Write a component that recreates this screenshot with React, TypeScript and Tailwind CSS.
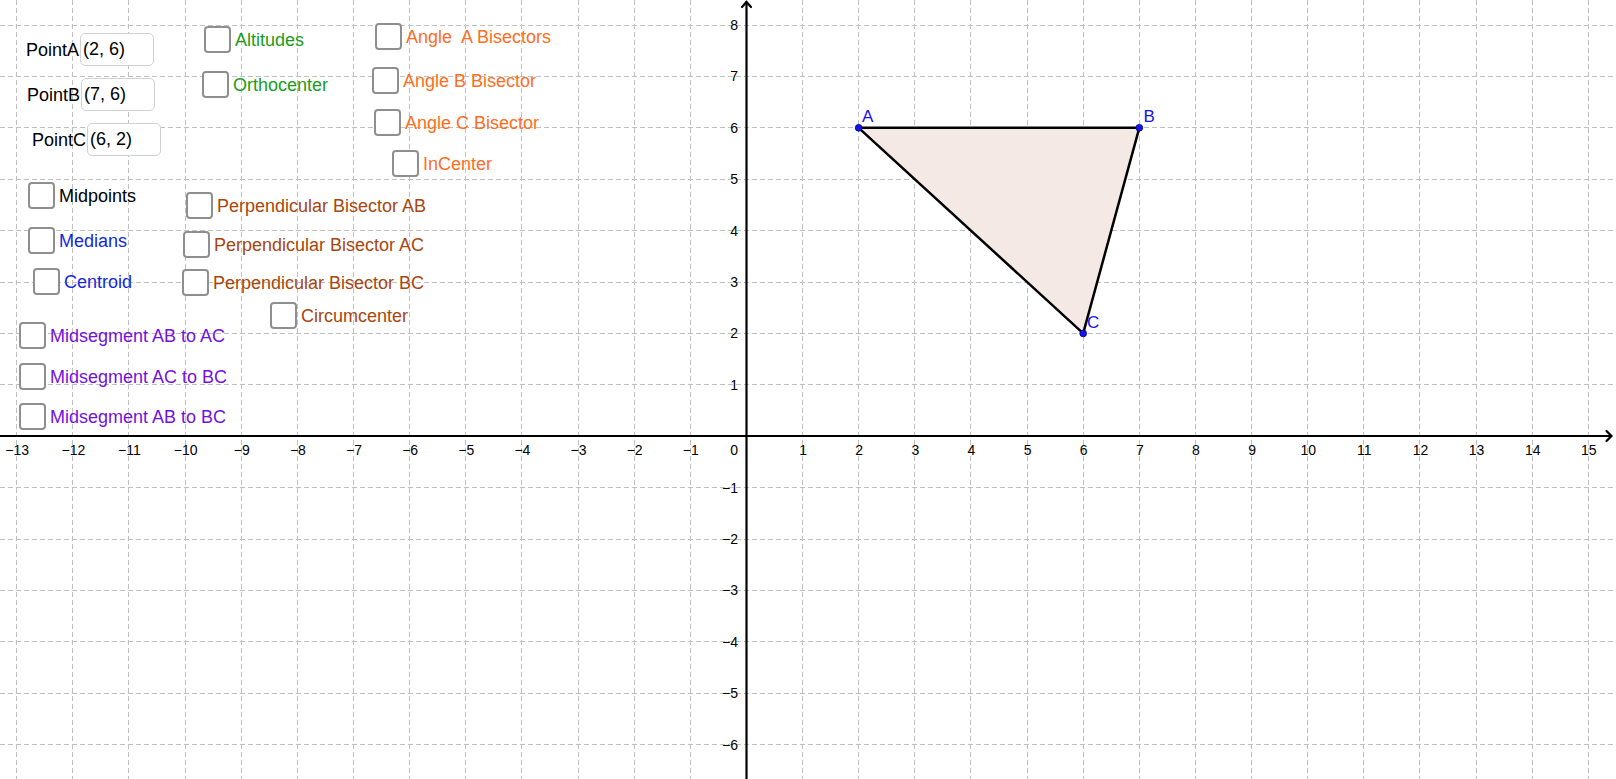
import React from 'react';

const UX = 56.13;
const UY = 51.4;
const OX = 746.4;
const OY = 436.2;

const px = (x: number) => OX + UX * x;
const py = (y: number) => OY - UY * y;
const crisp = (v: number) => Math.round(v - 0.5) + 0.5;

const MINUS = '\u2212';
const fmt = (n: number) => (n < 0 ? MINUS + Math.abs(n) : String(n));

interface Toggle {
  x: number;
  y: number;
  label: string;
  color: string;
}

const GREEN = 'text-[#1a9c1a]';
const ORANGE = 'text-[#ff6d1e]';
const BROWN = 'text-[#a8460d]';
const BLUE = 'text-[#1428e0]';
const PURPLE = 'text-[#7311dd]';
const BLACK = 'text-black';

const toggles: Toggle[] = [
  { x: 204, y: 26, label: 'Altitudes', color: GREEN },
  { x: 202, y: 71, label: 'Orthocenter', color: GREEN },
  { x: 375, y: 23, label: 'Angle\u00a0 A Bisectors', color: ORANGE },
  { x: 372, y: 67, label: 'Angle B Bisector', color: ORANGE },
  { x: 374, y: 109, label: 'Angle C Bisector', color: ORANGE },
  { x: 392, y: 150, label: 'InCenter', color: ORANGE },
  { x: 28, y: 182, label: 'Midpoints', color: BLACK },
  { x: 28, y: 227, label: 'Medians', color: BLUE },
  { x: 33, y: 268, label: 'Centroid', color: BLUE },
  { x: 186, y: 192, label: 'Perpendicular Bisector AB', color: BROWN },
  { x: 183, y: 231, label: 'Perpendicular Bisector AC', color: BROWN },
  { x: 182, y: 269, label: 'Perpendicular Bisector BC', color: BROWN },
  { x: 270, y: 302, label: 'Circumcenter', color: BROWN },
  { x: 19, y: 322, label: 'Midsegment AB to AC', color: PURPLE },
  { x: 19, y: 363, label: 'Midsegment AC to BC', color: PURPLE },
  { x: 19, y: 403, label: 'Midsegment AB to BC', color: PURPLE },
];

const inputs = [
  { x: 26, y: 33, label: 'PointA', value: '(2, 6)' },
  { x: 27, y: 78, label: 'PointB', value: '(7, 6)' },
  { x: 32, y: 123, label: 'PointC', value: '(6, 2)' },
];

const xs = Array.from({ length: 29 }, (_, i) => i - 13);
const ys = Array.from({ length: 15 }, (_, i) => i - 6);

const A = { x: px(2), y: py(6) };
const B = { x: px(7), y: py(6) };
const C = { x: px(6), y: py(2) };

function Graph() {
  return (
    <svg className="absolute inset-0" width={1616} height={779} viewBox="0 0 1616 779">
      {/* grid */}
      <g stroke="#c0c0c0" strokeWidth={1} strokeDasharray="5 3">
        {xs.filter((i) => i !== 0).map((i) => (
          <line key={'gx' + i} x1={crisp(px(i))} y1={0} x2={crisp(px(i))} y2={779} />
        ))}
        {ys.filter((j) => j !== 0).map((j) => (
          <line key={'gy' + j} x1={0} y1={crisp(py(j))} x2={1616} y2={crisp(py(j))} />
        ))}
      </g>

      {/* triangle */}
      <polygon
        points={`${A.x},${A.y} ${B.x},${B.y} ${C.x},${C.y}`}
        fill="#f5e9e5"
        stroke="black"
        strokeWidth={2.5}
        strokeLinejoin="round"
      />

      {/* axes */}
      <g stroke="black" strokeWidth={2.2} fill="none" strokeLinecap="round">
        <line x1={0} y1={436} x2={1611} y2={436} />
        <polyline points="1606.5,431 1611.5,436 1606.5,441" />
        <line x1={746.5} y1={2} x2={746.5} y2={779} />
        <polyline points="742,7 746.5,2 751,7" />
      </g>

      {/* axis labels */}
      <g fontFamily="'Liberation Sans', Arial, sans-serif" fontSize={14} fill="black">
        {xs.filter((i) => i !== 0).map((i) => (
          <text key={'lx' + i} x={px(i) + 0.5} y={454.5} textAnchor="middle">
            {fmt(i)}
          </text>
        ))}
        <text x={738} y={454.5} textAnchor="end">0</text>
        {ys.filter((j) => j !== 0).map((j) => (
          <text key={'ly' + j} x={738} y={py(j) + 5} textAnchor="end">
            {fmt(j)}
          </text>
        ))}
      </g>

      {/* points */}
      <g fill="#1414ee" stroke="#00007a" strokeWidth={0.8}>
        <circle cx={A.x} cy={A.y} r={3.4} />
        <circle cx={B.x} cy={B.y} r={3.4} />
        <circle cx={C.x} cy={C.y} r={3.4} />
      </g>
      <g fontFamily="'Liberation Sans', Arial, sans-serif" fontSize={17} fill="#1414e6">
        <text x={862} y={122}>A</text>
        <text x={1143.5} y={122}>B</text>
        <text x={1087} y={328}>C</text>
      </g>
    </svg>
  );
}

export default function App() {
  return (
    <div
      className="relative w-[1616px] h-[779px] bg-white overflow-hidden"
      style={{ fontFamily: "'Liberation Sans', Arial, sans-serif" }}
    >
      <Graph />

      {inputs.map((f) => (
        <div
          key={f.label}
          className="absolute flex items-center gap-[1px]"
          style={{ left: f.x, top: f.y }}
        >
          <span className="text-[18px] leading-none text-black">{f.label}</span>
          <div className="w-[74px] h-[33px] flex items-center pl-[2px] bg-white border border-[#d2d2d2] rounded-[5px] text-[18px] text-black">
            {f.value}
          </div>
        </div>
      ))}

      {toggles.map((t) => (
        <label
          key={t.label}
          className="absolute flex items-center gap-[4px] whitespace-nowrap"
          style={{ left: t.x, top: t.y }}
        >
          <span className="w-[27px] h-[27px] bg-white border-2 border-[#8f8f8f] rounded-[4px]" />
          <span className={`text-[18px] leading-none ${t.color}`}>{t.label}</span>
        </label>
      ))}
    </div>
  );
}
